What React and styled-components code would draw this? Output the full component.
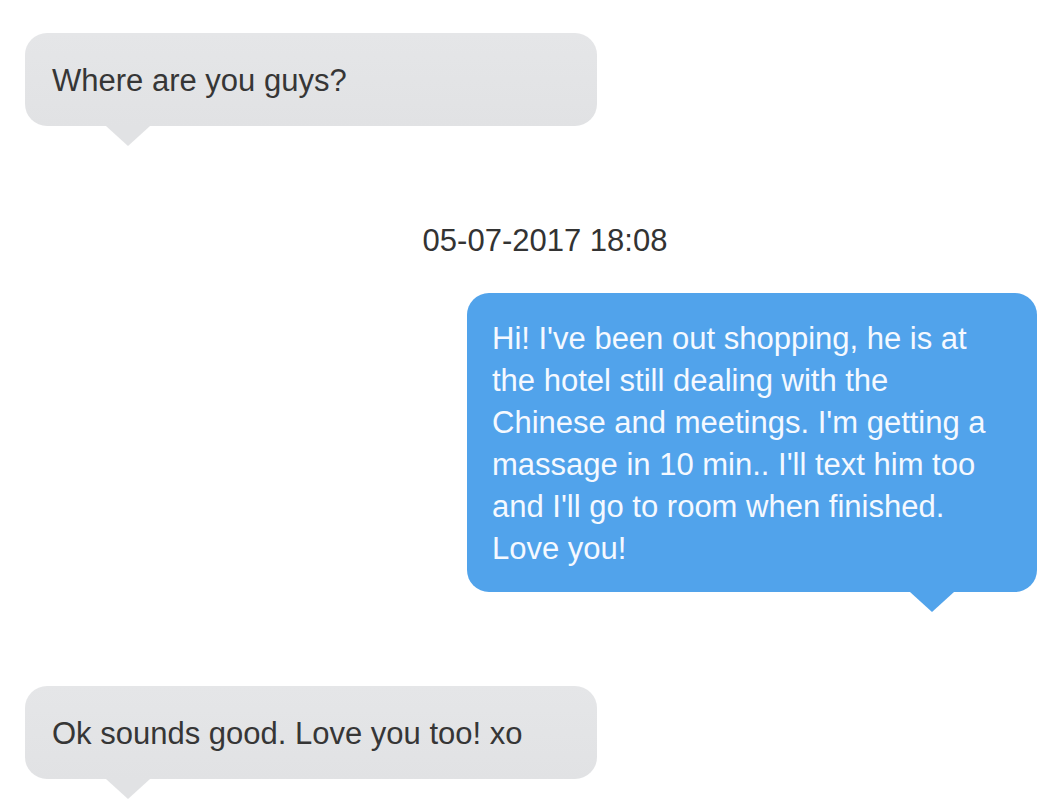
import styled, { createGlobalStyle } from "styled-components";

const GlobalStyle = createGlobalStyle`
  html, body {
    margin: 0;
    padding: 0;
    background: #ffffff;
  }
  body {
    font-family: "Liberation Sans", Arial, Helvetica, sans-serif;
  }
`;

const messages = [
  { id: 1, kind: "in", text: "Where are you guys?" },
  { id: 2, kind: "stamp", text: "05-07-2017 18:08" },
  {
    id: 3,
    kind: "out",
    text:
      "Hi! I've been out shopping, he is at the hotel still dealing with the Chinese and meetings. I'm getting a massage in 10 min.. I'll text him too and I'll go to room when finished. Love you!",
  },
  { id: 4, kind: "in", text: "Ok sounds good. Love you too! xo" },
];

const App = () => {
  return (
    <>
      <GlobalStyle />
      <Thread>
        {messages.map((m) =>
          m.kind === "stamp" ? (
            <Stamp key={m.id}>{m.text}</Stamp>
          ) : (
            <Bubble key={m.id} outgoing={m.kind === "out" ? 1 : 0}>
              {m.text}
            </Bubble>
          )
        )}
      </Thread>
    </>
  );
};

export default App;

const Thread = styled.div`
  display: flex;
  flex-direction: column;
  width: 1060px;
  height: 804px;
  box-sizing: border-box;
  padding: 33px 23px 0 25px;
  overflow: hidden;
`;

const Stamp = styled.div`
  margin-top: 94px;
  padding-left: 28px;
  text-align: center;
  font-size: 31px;
  line-height: 42px;
  color: #333333;
`;

const Bubble = styled.div`
  position: relative;
  box-sizing: border-box;
  align-self: ${(props) => (props.outgoing ? "flex-end" : "flex-start")};
  width: ${(props) => (props.outgoing ? "570px" : "572px")};
  margin-top: ${(props) => (props.outgoing ? "31px" : "0")};
  padding: ${(props) => (props.outgoing ? "25px 36px 22px 25px" : "27px 27px 24px 27px")};
  border-radius: 22px;
  background: ${(props) =>
    props.outgoing ? "#51a3eb" : "linear-gradient(#e5e6e8, #e1e2e4)"};
  color: ${(props) => (props.outgoing ? "#f5f9ff" : "#363636")};
  font-size: 31px;
  line-height: 42px;

  & + & {
    margin-top: 94px;
  }

  &::after {
    content: "";
    position: absolute;
    top: 100%;
    ${(props) => (props.outgoing ? "right: 83px;" : "left: 81px;")}
    border-left: 22px solid transparent;
    border-right: 22px solid transparent;
    border-top: 20px solid ${(props) => (props.outgoing ? "#51a3eb" : "#e1e2e4")};
  }
`;
